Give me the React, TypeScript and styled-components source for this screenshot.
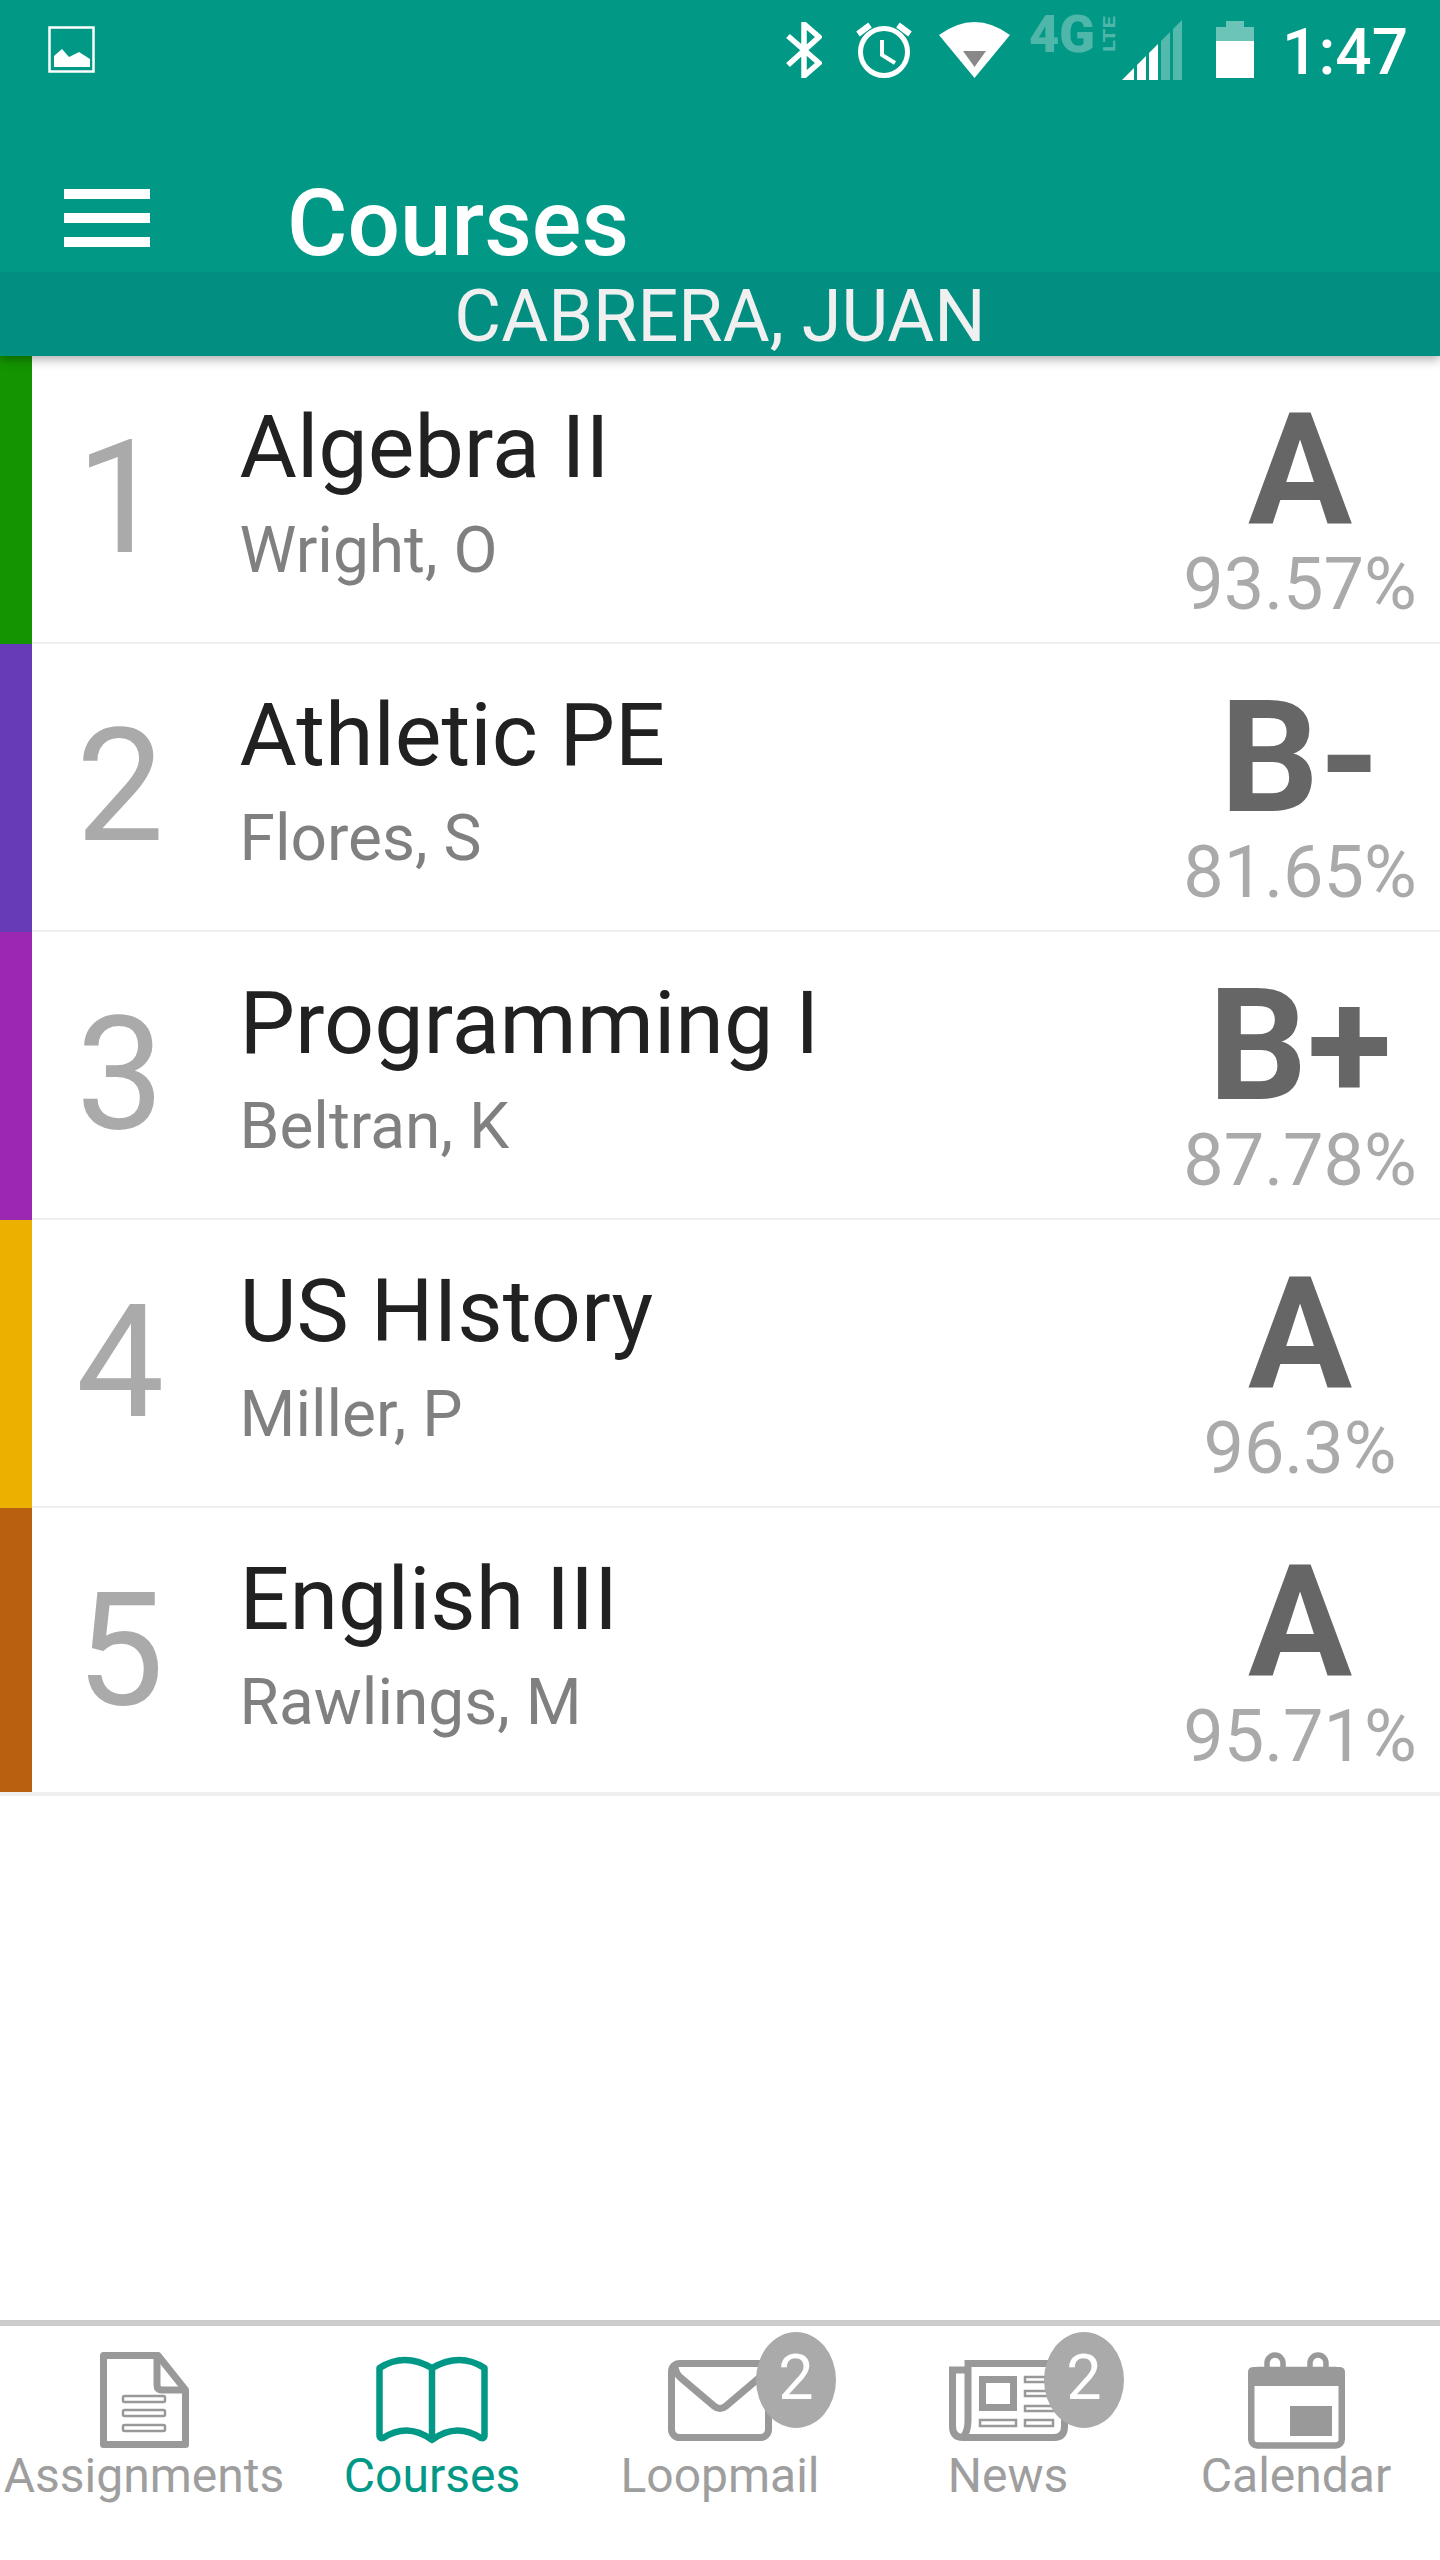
import styled, { createGlobalStyle } from 'styled-components'

const teal = '#029886'
const iconGray = '#999999'

const courses = [
  { period: 1, name: 'Algebra II', teacher: 'Wright, O', grade: 'A', score: '93.57%', color: '#149400' },
  { period: 2, name: 'Athletic PE', teacher: 'Flores, S', grade: 'B-', score: '81.65%', color: '#673ab7' },
  { period: 3, name: 'Programming I', teacher: 'Beltran, K', grade: 'B+', score: '87.78%', color: '#9c27b0' },
  { period: 4, name: 'US HIstory', teacher: 'Miller, P', grade: 'A', score: '96.3%', color: '#ebb000' },
  { period: 5, name: 'English III', teacher: 'Rawlings, M', grade: 'A', score: '95.71%', color: '#b86010' },
]

const GlobalStyle = createGlobalStyle`
  html, body {
    margin: 0;
    padding: 0;
    background: #fff;
    font-family: Roboto, 'Liberation Sans', sans-serif;
  }
`

const Screen = styled.div`
  display: flex;
  flex-direction: column;
  height: 2560px;
  overflow: hidden;
  background: #fff;
`

const Header = styled.header`
  position: relative;
  z-index: 2;
  background: ${teal};
  box-shadow: 0 3px 10px rgba(0, 0, 0, 0.35);
`

const StatusBar = styled.div`
  display: flex;
  align-items: flex-start;
  height: 100px;
  padding: 0 32px 0 48px;
`

const StatusIcon = styled.svg<{ $gap?: number; $top: number }>`
  display: block;
  flex: none;
  margin-top: ${({ $top }) => $top}px;
  margin-left: ${({ $gap }) => $gap ?? 0}px;
`

const Spacer = styled.div`
  flex: 1;
`

const Clock = styled.span`
  margin-top: 18px;
  margin-left: 28px;
  color: #fff;
  font-size: 64px;
  font-weight: 500;
  line-height: 70px;
`

const Toolbar = styled.div`
  display: flex;
  align-items: flex-start;
  height: 172px;
  padding-left: 64px;
`

const MenuIcon = styled.svg`
  display: block;
  flex: none;
  margin-top: 89px;
`

const Title = styled.h1`
  margin: 76px 0 0 137px;
  color: #fff;
  font-size: 92.6px;
  font-weight: 500;
  line-height: 96px;
`

const StudentBar = styled.div`
  height: 84px;
  padding-top: 3px;
  box-sizing: border-box;
  background: #038e82;
  color: #f0f0f0;
  font-size: 72px;
  font-weight: 400;
  line-height: 84px;
  text-align: center;
`

const CourseList = styled.main`
  flex: 1;
`

const RowStack = styled.div`
  border-bottom: 4px solid #eeeeee;
`

const CourseRow = styled.div`
  display: flex;
  height: 288px;

  &:last-child {
    height: 284px;
  }
`

const ColorStrip = styled.div<{ $color: string }>`
  flex: none;
  width: 32px;
  background: ${({ $color }) => $color};
`

const RowBody = styled.div`
  display: flex;
  flex: 1;
  border-bottom: 2px solid #eeeeee;

  ${CourseRow}:last-child & {
    border-bottom: 0;
  }
`

const Period = styled.div`
  flex: none;
  width: 164px;
  padding: 62px 0 0 44px;
  color: #aaaaaa;
  font-size: 157px;
  font-weight: 400;
  line-height: 160px;
`

const CourseInfo = styled.div`
  flex: 1;
  padding-top: 41px;
`

const CourseName = styled.div`
  margin-left: -0.5px;
  color: #212121;
  font-size: 88px;
  line-height: 100px;
`

const Teacher = styled.div`
  margin-top: 14px;
  margin-left: -0.5px;
  color: #808080;
  font-size: 64px;
  line-height: 80px;
`

const GradeBox = styled.div`
  flex: none;
  width: 280px;
  padding-top: 39px;
  text-align: center;
`

const Grade = styled.div`
  color: #666666;
  font-size: 155px;
  font-weight: 700;
  line-height: 150px;
`

const Score = styled.div`
  margin-top: 1px;
  color: #aaaaaa;
  font-size: 72px;
  line-height: 78px;
`

const TabBar = styled.nav`
  display: flex;
  flex: none;
  height: 234px;
  border-top: 6px solid #cccccc;
`

const Tab = styled.div<{ $active?: boolean }>`
  position: relative;
  flex: 1;
  display: flex;
  flex-direction: column;
  align-items: center;
  padding-top: 24px;
  color: ${({ $active }) => ($active ? teal : iconGray)};
`

const TabIcon = styled.div`
  display: flex;
  align-items: center;
  justify-content: center;
  height: 100px;
`

const TabLabel = styled.span<{ $active?: boolean }>`
  margin-top: -2px;
  color: ${({ $active }) => ($active ? teal : '#9e9e9e')};
  font-size: 48px;
  line-height: 56px;
  white-space: nowrap;
`

const Badge = styled.span`
  position: absolute;
  top: 6px;
  left: 180px;
  width: 80px;
  height: 96px;
  border-radius: 50%;
  background: #aaaaaa;
  color: #fff;
  font-size: 63px;
  line-height: 92px;
  text-align: center;
`

const PictureIcon = () => (
  <StatusIcon $top={26} width='47' height='47' viewBox='0 0 47 47'>
    <rect x='1.5' y='1.5' width='44' height='44' fill='none' stroke='#fff' strokeWidth='2.5' />
    <path d='M6 41V30L14 23L21 31L31 26L42 33V41Z' fill='#fff' />
  </StatusIcon>
)

const BluetoothIcon = () => (
  <StatusIcon $top={22} width='36' height='56' viewBox='0 0 36 56'>
    <path d='M2 14L33 41L18 54V2L33 15L2 43' fill='none' stroke='#fff' strokeWidth='5.5' />
  </StatusIcon>
)

const AlarmIcon = () => (
  <StatusIcon $gap={34} $top={22} width='56' height='56' viewBox='0 0 56 56'>
    <circle cx='28' cy='30' r='23.5' fill='none' stroke='#fff' strokeWidth='5' />
    <path d='M2 12L14 3M54 12L42 3' fill='none' stroke='#fff' strokeWidth='6' />
    <path d='M26 18V33L39 41' fill='none' stroke='#fff' strokeWidth='4' />
  </StatusIcon>
)

const WifiIcon = () => (
  <StatusIcon $gap={27} $top={22} width='71' height='56' viewBox='0 0 71 56'>
    <path d='M0 13Q35.5 -13 71 13L35.5 56Z' fill='#fff' />
    <path d='M24 29H47L35.5 45Z' fill='#888888' />
  </StatusIcon>
)

const NetworkIcon = () => (
  <StatusIcon $gap={19} $top={3} width='92' height='52' viewBox='0 0 92 52' fill='#fff' opacity='0.3'>
    <text x='0' y='49' fontFamily='Roboto, sans-serif' fontSize='52' fontWeight='900' textLength='66' lengthAdjust='spacingAndGlyphs'>
      4G
    </text>
    <text
      transform='translate(86 49) rotate(-90)'
      fontFamily='Roboto, sans-serif'
      fontSize='17'
      fontWeight='700'
      textLength='36'
      lengthAdjust='spacingAndGlyphs'
    >
      LTE
    </text>
  </StatusIcon>
)

const signalBars = [
  { from: 0, to: 12, on: true },
  { from: 15, to: 24, on: true },
  { from: 27, to: 36, on: true },
  { from: 39, to: 48, on: false },
  { from: 51, to: 60, on: false },
]

const SignalIcon = () => (
  <StatusIcon $gap={1} $top={20} width='60' height='60' viewBox='0 0 60 60'>
    {signalBars.map(({ from, to, on }) => (
      <polygon
        key={from}
        points={`${from},60 ${from},${60 - from} ${to},${60 - to} ${to},60`}
        fill='#fff'
        opacity={on ? 1 : 0.32}
      />
    ))}
  </StatusIcon>
)

const BatteryIcon = () => (
  <StatusIcon $gap={34} $top={21} width='38' height='57' viewBox='0 0 38 57'>
    <path d='M10 0H28V6H38V20H0V6H10Z' fill='#fff' opacity='0.42' />
    <rect y='20' width='38' height='37' fill='#fff' />
  </StatusIcon>
)

const AssignmentsIcon = () => (
  <svg width='89' height='96' viewBox='0 0 89 96' fill='none' stroke='currentColor'>
    <path d='M3.5 3.5H58L85.5 38V92.5H3.5Z' strokeWidth='7' strokeLinejoin='round' />
    <path d='M57 4V33Q57 38 62 38H86' strokeWidth='7' />
    <rect x='23' y='44' width='42' height='6' rx='1.5' strokeWidth='2.5' />
    <rect x='23' y='58' width='42' height='6' rx='1.5' strokeWidth='2.5' />
    <rect x='23' y='73' width='42' height='6' rx='1.5' strokeWidth='2.5' />
  </svg>
)

const CoursesIcon = () => (
  <svg width='112' height='88' viewBox='0 0 112 88' fill='none' stroke='currentColor' strokeWidth='6.5' strokeLinejoin='round'>
    <path d='M3.5 12Q28 -4 56 12Q84 -4 108.5 12V80Q108 83 105 82Q80 66 56 84Q32 66 7 82Q4 83 3.5 80Z' />
    <path d='M56 12V84' />
  </svg>
)

const LoopmailIcon = () => (
  <svg width='104' height='81' viewBox='0 0 104 81' fill='none' stroke='currentColor' strokeWidth='7'>
    <rect x='3.5' y='3.5' width='97' height='74' rx='8' />
    <path d='M7 7Q8 14 13 18L46 46Q52 51 58 46L91 18Q96 14 97 7' />
  </svg>
)

const NewsIcon = () => (
  <svg width='119' height='81' viewBox='0 0 119 81' fill='none' stroke='currentColor'>
    <path d='M16 10H3.5V66Q3.5 77.5 14 77.5H105Q115.5 77.5 115.5 66V3.5H19V60Q19 72 14 77' strokeWidth='7' />
    <rect x='33.5' y='19.5' width='31' height='28' strokeWidth='7' />
    <rect x='76' y='17' width='34' height='5' strokeWidth='2.5' />
    <rect x='76' y='31' width='34' height='5' strokeWidth='2.5' />
    <rect x='76' y='46' width='34' height='5' strokeWidth='2.5' />
    <rect x='31' y='60' width='36' height='6' strokeWidth='2.5' />
    <rect x='76' y='60' width='28' height='6' strokeWidth='2.5' />
  </svg>
)

const CalendarIcon = () => (
  <svg width='97' height='97' viewBox='0 0 97 97' fill='none' stroke='currentColor'>
    <rect x='3.25' y='18' width='90.5' height='75.5' rx='6' strokeWidth='6.5' />
    <path d='M0 34V20Q0 15 6 15H91Q97 15 97 20V34Z' fill='currentColor' stroke='none' />
    <path d='M19 18V11A8 8 0 0 1 35 11V18M62 18V11A8 8 0 0 1 78 11V18' strokeWidth='5.5' />
    <rect x='42' y='54' width='42' height='30' fill='currentColor' stroke='none' />
  </svg>
)

const App = () => {
  return (
    <Screen>
      <GlobalStyle />
      <Header>
        <StatusBar>
          <PictureIcon />
          <Spacer />
          <BluetoothIcon />
          <AlarmIcon />
          <WifiIcon />
          <NetworkIcon />
          <SignalIcon />
          <BatteryIcon />
          <Clock>1:47</Clock>
        </StatusBar>
        <Toolbar>
          <MenuIcon width='86' height='58' viewBox='0 0 86 58' fill='#fff'>
            <rect width='86' height='10' />
            <rect y='24' width='86' height='10' />
            <rect y='48' width='86' height='10' />
          </MenuIcon>
          <Title>Courses</Title>
        </Toolbar>
        <StudentBar>CABRERA, JUAN</StudentBar>
      </Header>
      <CourseList>
        <RowStack>
          {courses.map((course) => (
            <CourseRow key={course.period}>
              <ColorStrip $color={course.color} />
              <RowBody>
                <Period>{course.period}</Period>
                <CourseInfo>
                  <CourseName>{course.name}</CourseName>
                  <Teacher>{course.teacher}</Teacher>
                </CourseInfo>
                <GradeBox>
                  <Grade>{course.grade}</Grade>
                  <Score>{course.score}</Score>
                </GradeBox>
              </RowBody>
            </CourseRow>
          ))}
        </RowStack>
      </CourseList>
      <TabBar>
        <Tab>
          <TabIcon>
            <AssignmentsIcon />
          </TabIcon>
          <TabLabel>Assignments</TabLabel>
        </Tab>
        <Tab $active>
          <TabIcon>
            <CoursesIcon />
          </TabIcon>
          <TabLabel $active>Courses</TabLabel>
        </Tab>
        <Tab>
          <TabIcon>
            <LoopmailIcon />
          </TabIcon>
          <TabLabel>Loopmail</TabLabel>
          <Badge>2</Badge>
        </Tab>
        <Tab>
          <TabIcon>
            <NewsIcon />
          </TabIcon>
          <TabLabel>News</TabLabel>
          <Badge>2</Badge>
        </Tab>
        <Tab>
          <TabIcon>
            <CalendarIcon />
          </TabIcon>
          <TabLabel>Calendar</TabLabel>
        </Tab>
      </TabBar>
    </Screen>
  )
}

export default App
